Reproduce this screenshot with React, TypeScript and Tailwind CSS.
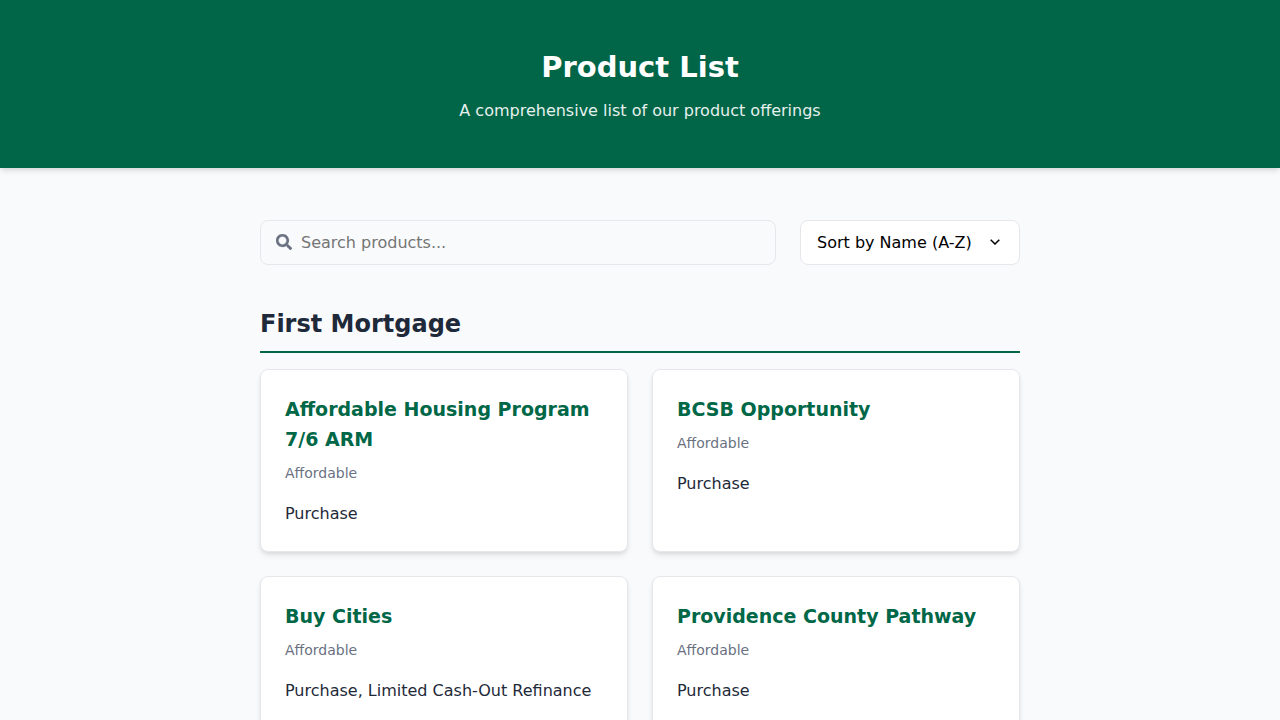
import { useState } from "react";
import { FaSearch } from "react-icons/fa";

type Product = { name: string; category: string; purpose: string };

const products: Product[] = [
  { name: "Affordable Housing Program 7/6 ARM", category: "Affordable", purpose: "Purchase" },
  { name: "BCSB Opportunity", category: "Affordable", purpose: "Purchase" },
  { name: "Buy Cities", category: "Affordable", purpose: "Purchase, Limited Cash-Out Refinance" },
  { name: "Providence County Pathway", category: "Affordable", purpose: "Purchase" },
];

function ProductCard({ product }: { product: Product }) {
  return (
    <article className="rounded-lg border border-gray-200 bg-white p-6 shadow-[0_4px_6px_-1px_rgba(0,0,0,0.1),0_2px_4px_-1px_rgba(0,0,0,0.06)]">
      <h3 className="mb-2 text-[19px] leading-[30px] font-bold text-[#006747]">{product.name}</h3>
      <p className="mb-4 text-[14px] leading-[23px] text-gray-500">{product.category}</p>
      <p className="text-base leading-[26px]">{product.purpose}</p>
    </article>
  );
}

export default function App() {
  const [query, setQuery] = useState("");
  const [sort, setSort] = useState("name-asc");

  const visible = products.filter((p) => p.name.toLowerCase().includes(query.toLowerCase()));
  if (sort === "name-desc") visible.reverse();

  return (
    <div className="min-h-screen bg-gray-50 pb-12 font-['DejaVu_Sans',sans-serif] text-gray-800">
      <header className="bg-[#006647] px-6 py-11 text-center text-white shadow-[0_4px_6px_-1px_rgba(0,0,0,0.1),0_2px_4px_-1px_rgba(0,0,0,0.06)]">
        <h1 className="mb-2 text-[29px] leading-[46px] font-bold">Product List</h1>
        <p className="text-base leading-[26px] opacity-90">A comprehensive list of our product offerings</p>
      </header>
      <main className="mx-auto mt-13 max-w-[808px] px-6">
        <div className="mb-10 flex gap-6">
          <div className="relative flex-1">
            <FaSearch aria-hidden="true" stroke="currentColor" strokeWidth="6" className="absolute top-[14px] left-4 size-4 text-gray-500" />
            <input
              type="search"
              aria-label="Search products"
              placeholder="Search products..."
              value={query}
              onChange={(e) => setQuery(e.target.value)}
              className="h-[45px] w-full rounded-lg border border-gray-200 bg-gray-50 pr-4 pl-10 text-base placeholder:text-[#757575]"
            />
          </div>
          <div className="relative w-[220px]">
            <select
              aria-label="Sort products"
              value={sort}
              onChange={(e) => setSort(e.target.value)}
              className="h-[45px] w-full appearance-none rounded-lg border border-gray-200 bg-white px-4 text-base text-black"
            >
              <option value="name-asc">Sort by Name (A-Z)</option>
              <option value="name-desc">Sort by Name (Z-A)</option>
            </select>
            <svg aria-hidden="true" viewBox="0 0 10 6" className="pointer-events-none absolute top-[19px] right-5 h-[6px] w-[10px]">
              <path d="M.7.7 5 5 9.3.7" fill="none" stroke="black" strokeWidth="1.5" />
            </svg>
          </div>
        </div>
        <section>
          <h2 className="mb-4 border-b-2 border-[#006647] pb-2 text-2xl leading-[38px] font-bold">First Mortgage</h2>
          <div className="grid grid-cols-2 gap-6">
            {visible.map((p) => (
              <ProductCard key={p.name} product={p} />
            ))}
          </div>
        </section>
      </main>
    </div>
  );
}
